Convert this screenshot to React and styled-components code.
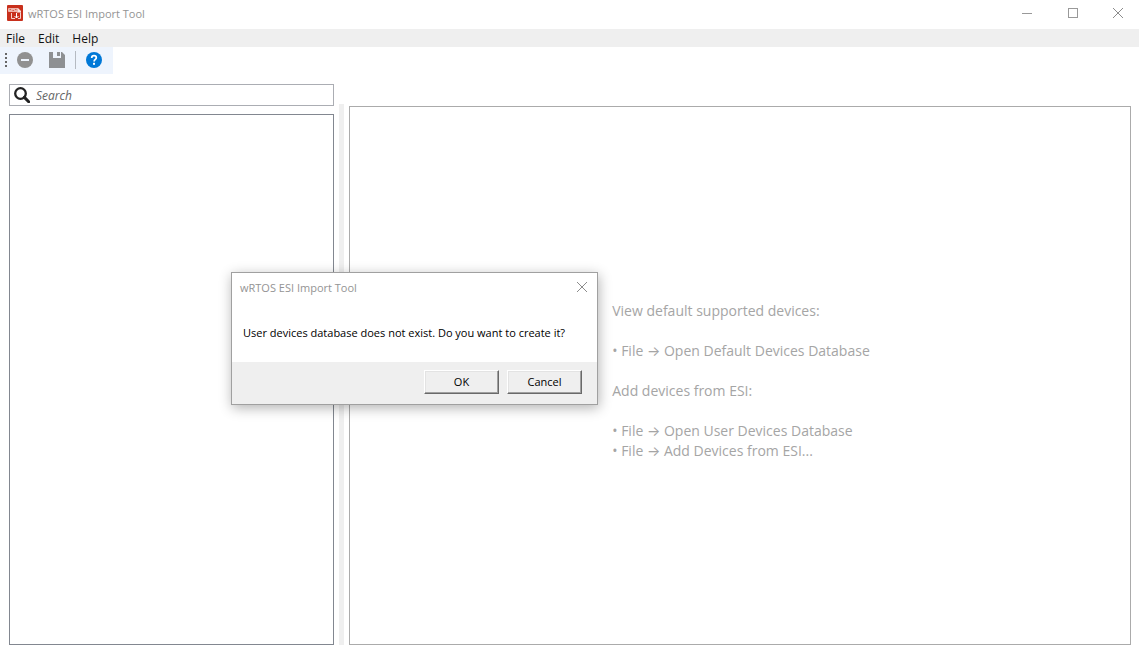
import React, { useState } from "react"
import styled, { createGlobalStyle } from "styled-components"

const APP_TITLE = "wRTOS ESI Import Tool"
const MENUS = ["File", "Edit", "Help"]

const AppIcon = () => (
	<svg width="16" height="16" viewBox="0 0 16 16" aria-hidden="true">
		<rect width="16" height="16" rx="1" fill="#c8301c" />
		<path d="M4.5 8V13.5H8M13.5 7.5V13.5H11" fill="none" stroke="#f4d0ca" />
		<path d="M9.5 3H11L14 6V7.5H9.5Z" fill="#f9e4e0" />
		<rect x="1" y="3" width="10" height="4" rx="1" fill="#eeb3aa" />
		<path d="M2.5 4.5H4M5.5 5.5H7M8 4.5H9.5" stroke="#d4604f" />
		<path d="M9.5 8V13M7.5 11L9.5 13L11.5 11" fill="none" stroke="#fff" />
	</svg>
)

const MinimizeIcon = () => (
	<svg width="10" height="10" viewBox="0 0 10 10" shapeRendering="crispEdges" aria-hidden="true">
		<path d="M0 5.5H10" stroke="#999" />
	</svg>
)

const MaximizeIcon = () => (
	<svg width="10" height="10" viewBox="0 0 10 10" shapeRendering="crispEdges" aria-hidden="true">
		<rect x="0.5" y="0.5" width="9" height="9" fill="none" stroke="#999" />
	</svg>
)

const CloseIcon = () => (
	<svg width="10" height="10" viewBox="0 0 10 10" aria-hidden="true">
		<path d="M0 0L10 10M10 0L0 10" stroke="#8c8c8c" />
	</svg>
)

const RemoveIcon = () => (
	<svg width="16" height="16" viewBox="0 0 16 16" aria-hidden="true">
		<circle cx="8" cy="8" r="8" fill="#919191" />
		<rect x="4" y="7" width="8" height="2" fill="#eef4fd" />
	</svg>
)

const SaveIcon = () => (
	<svg width="16" height="16" viewBox="0 0 16 16" aria-hidden="true">
		<path d="M0 0H4V6H12V0H13L16 3V16H0Z" fill="#8e9093" />
		<rect x="8" y="0" width="3" height="4" fill="#8e9093" />
	</svg>
)

const HelpIcon = () => (
	<svg width="16" height="16" viewBox="0 0 16 16" aria-hidden="true">
		<circle cx="8" cy="8" r="8" fill="#0078d7" />
		<path d="M5.7 5.9C5.7 4.4 6.6 3.7 8 3.7C9.4 3.7 10.3 4.5 10.3 5.7C10.3 7.4 8.1 7.4 8.1 9.6" fill="none" stroke="#fff" strokeWidth="1.7" />
		<rect x="7" y="10.8" width="2" height="2" fill="#fff" />
	</svg>
)

const SearchIcon = () => (
	<svg width="16" height="16" viewBox="0 0 16 16" aria-hidden="true">
		<circle cx="6.5" cy="6.5" r="5.3" fill="none" stroke="#222" strokeWidth="2.3" />
		<path d="M10.4 10.4L14.7 14.7" stroke="#222" strokeWidth="3" strokeLinecap="round" />
	</svg>
)

const App = () => {
	const [query, setQuery] = useState("")
	const [dialogOpen, setDialogOpen] = useState(true)

	const closeDialog = () => setDialogOpen(false)

	return (
		<Window>
			<GlobalStyle />
			<TitleBar>
				<AppIcon />
				<Title>{APP_TITLE}</Title>
				<CaptionButton aria-label="Minimize">
					<MinimizeIcon />
				</CaptionButton>
				<CaptionButton aria-label="Maximize">
					<MaximizeIcon />
				</CaptionButton>
				<CaptionButton aria-label="Close">
					<CloseIcon />
				</CaptionButton>
			</TitleBar>

			<MenuBar>
				{MENUS.map((menu) => (
					<MenuButton key={menu}>{menu}</MenuButton>
				))}
			</MenuBar>

			<Toolbar>
				<Grip />
				<ToolButton aria-label="Remove" disabled>
					<RemoveIcon />
				</ToolButton>
				<ToolButton aria-label="Save" disabled>
					<SaveIcon />
				</ToolButton>
				<ToolSeparator />
				<ToolButton aria-label="Help">
					<HelpIcon />
				</ToolButton>
			</Toolbar>

			<Workspace>
				<Sidebar>
					<SearchBox>
						<SearchIcon />
						<input
							type="text"
							aria-label="Search"
							placeholder="Search"
							value={query}
							onChange={(e) => setQuery(e.target.value)}
						/>
					</SearchBox>
					<DeviceList />
				</Sidebar>
				<Splitter />
				<DetailPanel>
					<Hints>
						<p>View default supported devices:</p>
						<ul>
							<li>
								• File <Arrow>→</Arrow> Open Default Devices Database
							</li>
						</ul>
						<p>Add devices from ESI:</p>
						<ul>
							<li>
								• File <Arrow>→</Arrow> Open User Devices Database
							</li>
							<li>
								• File <Arrow>→</Arrow> Add Devices from ESI...
							</li>
						</ul>
					</Hints>
				</DetailPanel>
			</Workspace>

			{dialogOpen && (
				<Dialog role="dialog" aria-labelledby="dialog-title">
					<DialogHeader>
						<Title id="dialog-title">{APP_TITLE}</Title>
						<DialogClose aria-label="Close dialog" onClick={closeDialog}>
							<CloseIcon />
						</DialogClose>
					</DialogHeader>
					<DialogMessage>User devices database does not exist. Do you want to create it?</DialogMessage>
					<DialogFooter>
						<PushButton onClick={closeDialog}>OK</PushButton>
						<PushButton onClick={closeDialog}>Cancel</PushButton>
					</DialogFooter>
				</Dialog>
			)}
		</Window>
	)
}

const GlobalStyle = createGlobalStyle`
	* {
		box-sizing: border-box;
	}

	body {
		margin: 0;
		background: #fff;
		font-family: "Open Sans", "Noto Sans", sans-serif;
		font-size: 12px;
		line-height: 16px;
	}

	button,
	input {
		font: inherit;
		color: inherit;
		padding: 0;
		border: none;
		background: none;
	}
`

const Window = styled.div`
	position: relative;
	display: flex;
	flex-direction: column;
	min-height: 100vh;
`

const TitleBar = styled.header`
	display: flex;
	align-items: center;
	height: 29px;
	padding: 0 0 3px 7px;
`

const Title = styled.span`
	flex: 1;
	padding-top: 1px;
	color: #949494;
	font-size: 11px;

	svg + & {
		margin-left: 5px;
	}
`

const CaptionButton = styled.button`
	display: flex;
	align-items: center;
	justify-content: center;
	width: 46px;
	height: 26px;

	&:last-child {
		width: 43px;
	}
`

const MenuBar = styled.nav`
	display: flex;
	gap: 1px;
	height: 18px;
	background: #efefef;
`

const MenuButton = styled.button`
	padding: 1px 6px 0;
	color: #111;
`

const Toolbar = styled.div`
	display: flex;
	align-items: center;
	align-self: flex-start;
	width: 113px;
	height: 27px;
	padding: 0 0 1px 5px;
	background: #eef4fd;
`

const Grip = styled.span`
	width: 2px;
	height: 14px;
	margin-right: 2px;
	background: repeating-linear-gradient(#666 0 2px, transparent 2px 4px);
`

const ToolButton = styled.button`
	display: flex;
	align-items: center;
	justify-content: center;
	width: 32px;
	height: 24px;
`

const ToolSeparator = styled.span`
	width: 1px;
	height: 18px;
	margin: 0 2px;
	background: #b5bac2;
`

const Workspace = styled.main`
	flex: 1;
	display: flex;
	gap: 5px;
	padding: 10px 8px 9px 9px;
`

const Sidebar = styled.section`
	display: flex;
	flex-direction: column;
	gap: 8px;
	width: 325px;
`

const SearchBox = styled.label`
	display: flex;
	align-items: center;
	height: 22px;
	padding: 0 4px;
	border: 1px solid #abadb3;

	input {
		flex: 1;
		min-width: 0;
		margin-left: 6px;
		padding-top: 2px;
		outline: none;
	}

	input::placeholder {
		color: #666;
		font-style: italic;
		opacity: 1;
	}
`

const DeviceList = styled.div`
	flex: 1;
	border: 1px solid #828790;
`

const Splitter = styled.div`
	width: 5px;
	margin-top: 20px;
	background: #efefef;
`

const DetailPanel = styled.section`
	flex: 1;
	display: flex;
	align-items: center;
	justify-content: center;
	margin-top: 22px;
	padding: 10px 0 0 2px;
	border: 1px solid #ababab;
`

const Hints = styled.div`
	color: #a5a5a5;
	font-size: 14px;
	line-height: 20px;

	p {
		margin: 0;
	}

	ul {
		margin: 20px 0;
		padding: 0;
		list-style: none;
	}

	ul:last-child {
		margin-bottom: 0;
	}
`

const Arrow = styled.span`
	font-family: Inter, sans-serif;
`

const Dialog = styled.div`
	position: absolute;
	top: 272px;
	left: 231px;
	width: 367px;
	border: 1px solid #a0a0a0;
	background: #fff;
	box-shadow: 1px 3px 12px rgba(0, 0, 0, 0.3);
`

const DialogHeader = styled.div`
	display: flex;
	align-items: center;
	height: 28px;
	padding-left: 8px;
`

const DialogClose = styled.button`
	display: flex;
	align-items: center;
	justify-content: center;
	width: 30px;
	height: 28px;
`

const DialogMessage = styled.p`
	margin: 0;
	padding: 24px 11px 21px;
	color: #000;
	font-size: 11px;
`

const DialogFooter = styled.div`
	display: flex;
	justify-content: flex-end;
	gap: 8px;
	padding: 8px 15px 10px;
	background: #efefef;
`

const PushButton = styled.button`
	width: 75px;
	height: 24px;
	border: 1px solid;
	border-color: #fff #696969 #696969 #fff;
	box-shadow: inset -1px -1px #a0a0a0, inset 1px 1px #e3e3e3;
	background: #efefef;
	color: #000;
	font-size: 11px;
`

export default App
